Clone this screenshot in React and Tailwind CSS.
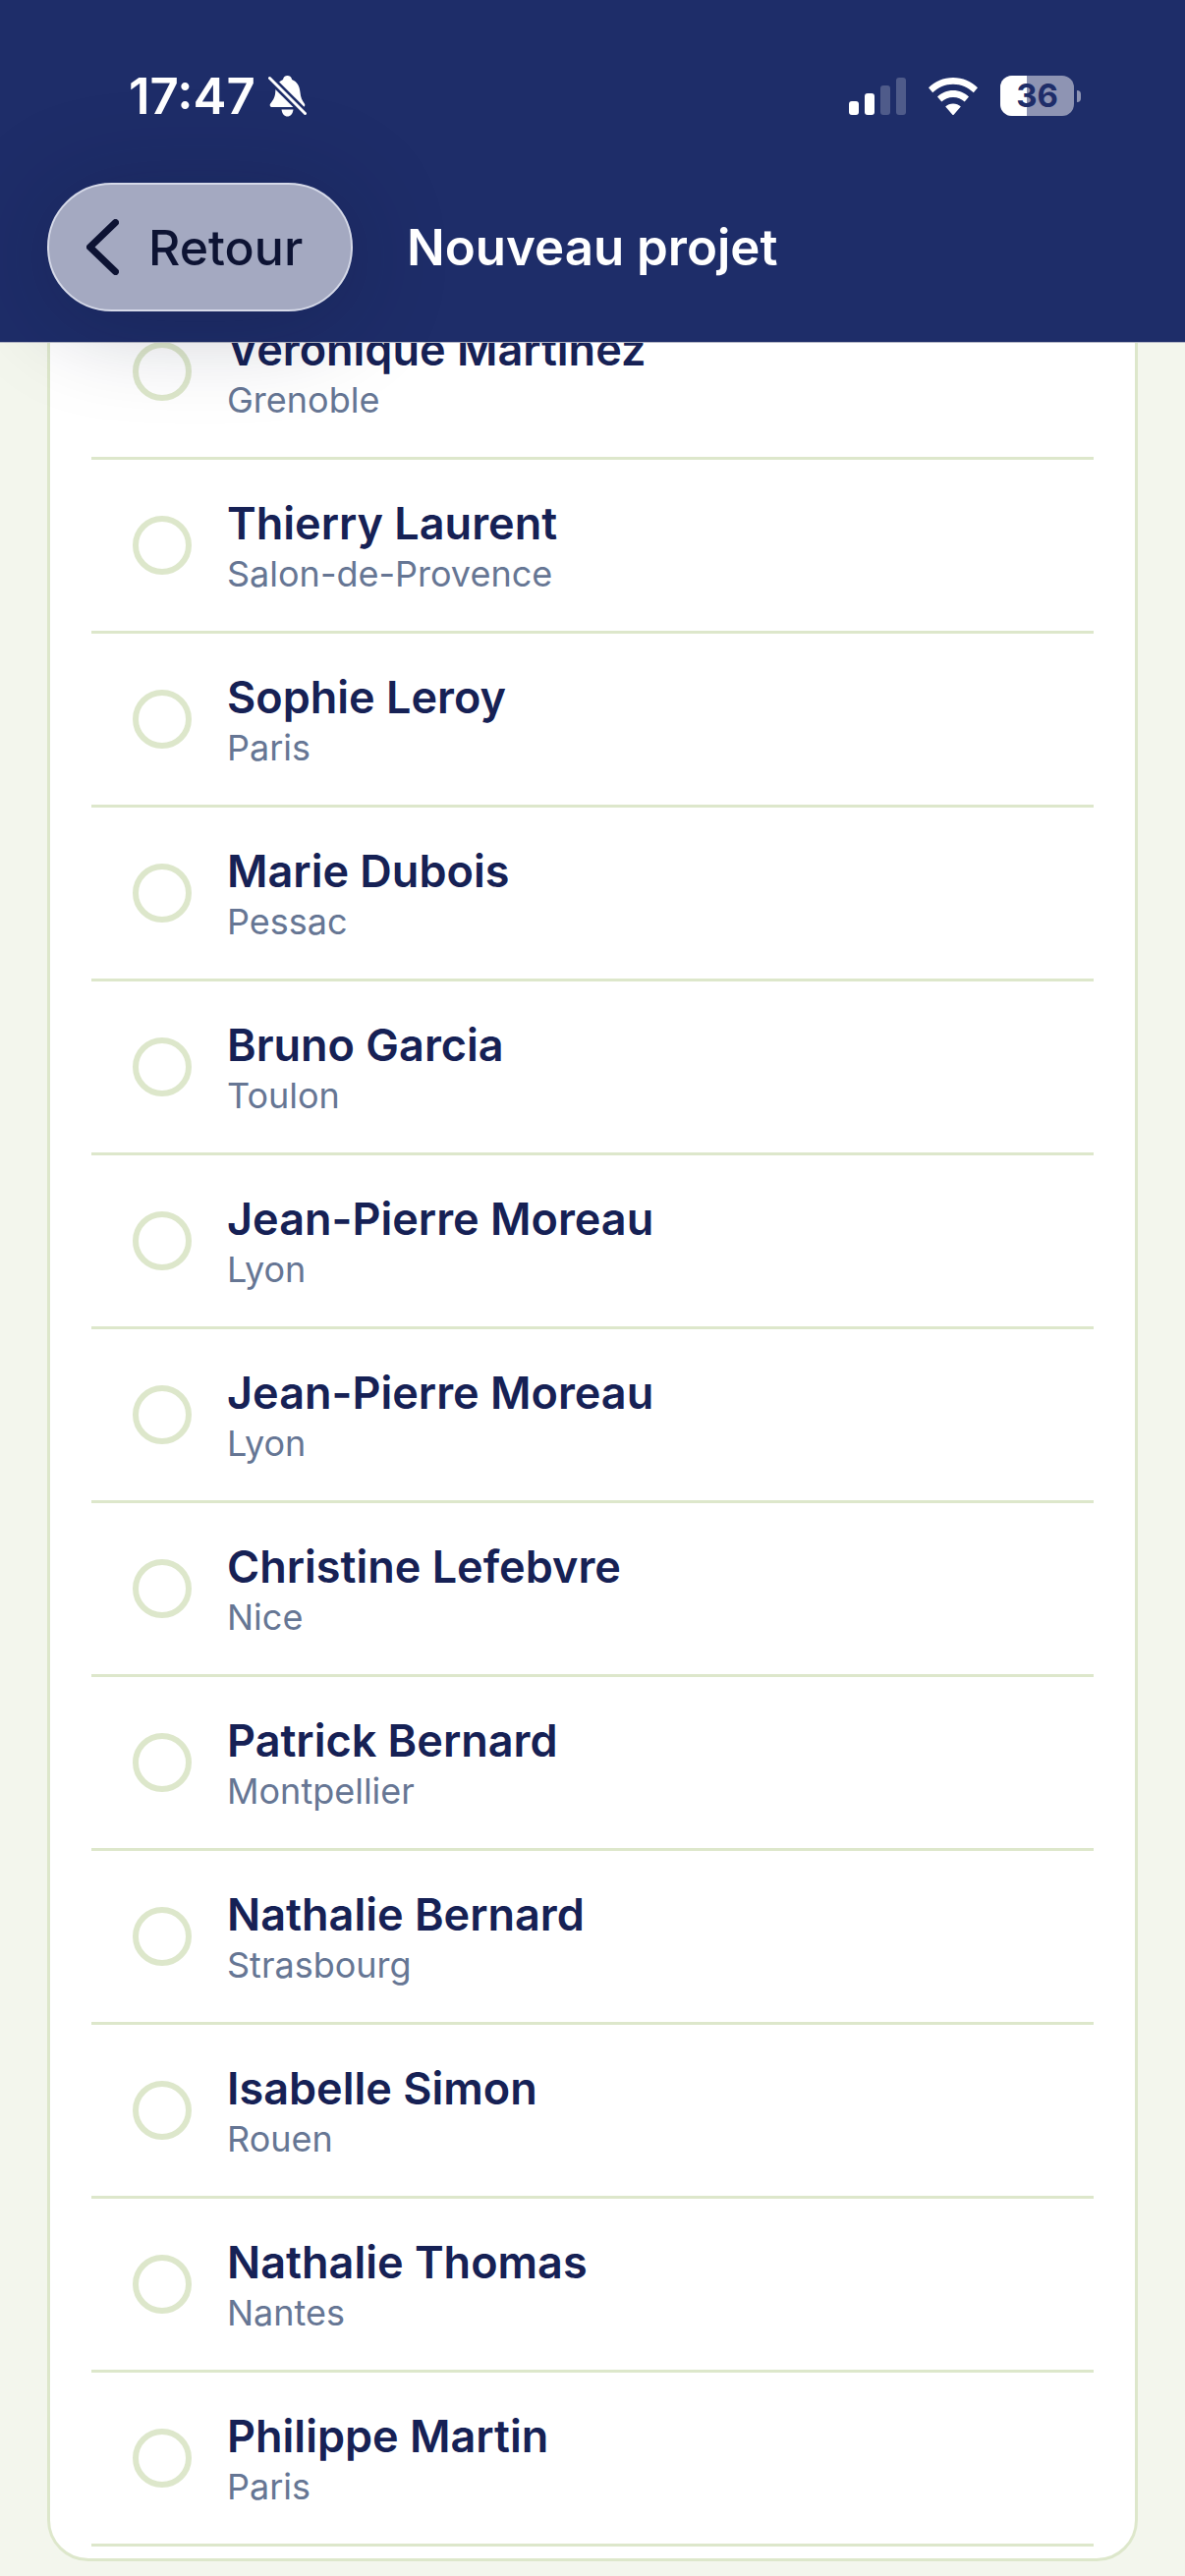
const rows = [
  ["Véronique Martinez", "Grenoble"],
  ["Thierry Laurent", "Salon-de-Provence"],
  ["Sophie Leroy", "Paris"],
  ["Marie Dubois", "Pessac"],
  ["Bruno Garcia", "Toulon"],
  ["Jean-Pierre Moreau", "Lyon"],
  ["Jean-Pierre Moreau", "Lyon"],
  ["Christine Lefebvre", "Nice"],
  ["Patrick Bernard", "Montpellier"],
  ["Nathalie Bernard", "Strasbourg"],
  ["Isabelle Simon", "Rouen"],
  ["Nathalie Thomas", "Nantes"],
  ["Philippe Martin", "Paris"],
];

function Bell() {
  return (
    <svg width="39" height="42" viewBox="0 0 39 42" fill="none" className="ml-[13px]">
      <path d="M19.500 0c2.400 0 4.200 1.700 4.600 3.900C29.500 6 32 11 32.500 17c.4 5 2 8.500 4.300 11.400 1.200 1.600.1 3.600-1.800 3.600H4c-1.900 0-3-2-1.800-3.600C5.500 24.500 7 21.500 7.300 16 7.700 10.500 10 6 15 3.900 15.400 1.700 17.100 0 19.500 0Z" fill="#fff" />
      <path d="M13.500 34.500h12c-.6 4.500-3 7-6 7s-5.400-2.500-6-7Z" fill="#fff" />
      <path d="M-2 -1 40 41" stroke="#1e2d69" strokeWidth="8" />
      <path d="M1.500 2.500 37.500 38.500" stroke="#fff" strokeWidth="3" strokeLinecap="round" />
    </svg>
  );
}

function StatusIcons() {
  return (
    <div className="flex items-center">
      <svg width="58" height="38" viewBox="0 0 58 38">
        <rect x="0" y="24" width="10" height="14" rx="3" fill="#fff" />
        <rect x="16" y="16" width="10" height="22" rx="3" fill="#fff" />
        <rect x="32" y="8" width="10" height="30" rx="3" fill="#fff" fillOpacity="0.22" />
        <rect x="48" y="0" width="10" height="38" rx="3" fill="#fff" fillOpacity="0.22" />
      </svg>
      <svg width="52" height="38" viewBox="0 0 52 38" className="ml-[22px]">
        <path d="M26 0C16 0 7.500 3.800 1 10.200l4.200 5C10.700 10 17.800 6.700 26 6.700S41.300 10 46.800 15.200l4.200-5C44.500 3.800 36 0 26 0Z" fill="#fff" />
        <path d="M26 13c-6.200 0-11.800 2.400-16 6.500l4.300 5.100C17.300 21.700 21.400 20 26 20s8.700 1.700 11.700 4.600l4.300-5.100C37.800 15.400 32.200 13 26 13Z" fill="#fff" />
        <path d="M26 26.500c-3 0-5.700 1.100-7.800 3L26 38.500l7.800-9c-2.100-1.900-4.800-3-7.800-3Z" fill="#fff" />
      </svg>
      <div className="relative ml-[22px] h-[41px] w-[75px] overflow-hidden rounded-[12px] bg-[#8e94b3]">
        <div className="h-full w-[27px] bg-white" />
        <span className="absolute inset-0 flex items-center justify-center text-[33px] font-bold leading-none text-[#1e2d69] [font-family:Inter,sans-serif]">
          36
        </span>
      </div>
      <div className="ml-[3px] h-[12px] w-[4px] rounded-r-full bg-[#8e94b3]" />
    </div>
  );
}

export default function App() {
  return (
    <div className="h-[2622px] overflow-hidden bg-[#f3f6ed] [font-family:Inter,sans-serif]">
      <header className="relative z-10 h-[349px] border-b border-[#b5b8c6] bg-[#1e2d69]">
        <div className="flex h-[186px] items-start justify-between pl-[131px] pr-[106px] pt-[77px]">
          <div className="flex items-center">
            <span className="text-[51px] font-semibold leading-[42px] text-white">17:47</span>
            <Bell />
          </div>
          <StatusIcons />
        </div>
        <div className="flex items-center pl-[48px]">
          <button className="flex h-[131px] w-[311px] items-center rounded-[66px] border-2 border-[#d5d9e8] bg-[#a4a9c1] pl-[38px] shadow-[0_10px_100px_rgba(15,20,50,0.28)]">
            <svg width="33" height="57" viewBox="0 0 33 57" fill="none">
              <path d="M29.500 3.500 3.500 28.500l26 25" stroke="#0d1333" strokeWidth="7" strokeLinecap="round" strokeLinejoin="round" />
            </svg>
            <span className="ml-[30px] text-[50px] font-medium leading-none text-[#0d1333]">Retour</span>
          </button>
          <h1 className="ml-[55px] text-[51px] font-semibold leading-none text-white">Nouveau projet</h1>
        </div>
      </header>
      <main className="-mt-[61px] px-[48px]">
        <div className="rounded-[42px] border-[3px] border-[#dde7cb] bg-white px-[42px] pb-[12px]">
          {rows.map(([name, city], i) => (
            <div key={i} className="flex h-[177px] items-center border-b-[3px] border-[#dde7cb] pl-[42px]">
              <div className="h-[60px] w-[60px] shrink-0 rounded-full border-[6px] border-[#dde7cb]" />
              <div className="ml-[36px] pt-[3px]">
                <div className="text-[45px] font-semibold leading-[54px] text-[#162155]">{name}</div>
                <div className="text-[36px] leading-[48px] text-[#667694]">{city}</div>
              </div>
            </div>
          ))}
        </div>
      </main>
    </div>
  );
}
